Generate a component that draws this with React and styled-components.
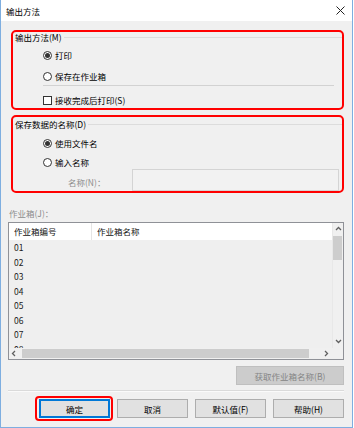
import styled, { createGlobalStyle } from 'styled-components';

const GlobalStyle = createGlobalStyle`
  html, body {
    margin: 0;
    padding: 0;
    background: #ffffff;
  }
  body {
    font-family: "Noto Sans CJK SC", "Noto Sans", sans-serif;
    font-size: 8.5px;
    color: #000;
  }
`;

const rows = ['01', '02', '03', '04', '05', '06', '07', '08'];

function Chevron({ dir }) {
  const paths = {
    up: 'M1 4 L3.5 1.5 L6 4',
    down: 'M1 2 L3.5 4.5 L6 2',
    left: 'M4 1 L1.5 3.5 L4 6',
    right: 'M2 1 L4.5 3.5 L2 6',
  };
  return (
    <svg width="7" height="7" viewBox="0 0 7 7">
      <path d={paths[dir]} fill="none" stroke="#606060" strokeWidth="1.3" />
    </svg>
  );
}

export default function App() {
  return (
    <>
      <GlobalStyle />
      <Window>
        <TitleBar>
          <Title>输出方法</Title>
          <svg width="9" height="9" viewBox="0 0 9 9">
            <path d="M0.5 0.5 L8.5 8.5 M8.5 0.5 L0.5 8.5" stroke="#222" strokeWidth="1" />
          </svg>
        </TitleBar>
        <Body>
          <Highlight $h={80}>
            <Legend $top={0}>
              <span>输出方法(M)</span>
              <LegendLine />
            </Legend>
            <Option $top={6}>
              <Radio $checked />
              <span>打印</span>
            </Option>
            <Option $top={9}>
              <Radio />
              <span>保存在作业箱</span>
            </Option>
            <Separator />
            <Option $top={8}>
              <Check />
              <span>接收完成后打印(S)</span>
            </Option>
          </Highlight>

          <Highlight $h={78} $top={5}>
            <Legend $top={2}>
              <span>保存数据的名称(D)</span>
              <LegendLine />
            </Legend>
            <Option $top={7}>
              <Radio $checked />
              <span>使用文件名</span>
            </Option>
            <Option $top={7}>
              <Radio />
              <span>输入名称</span>
            </Option>
            <NameRow>
              <NameLabel>名称(N)：</NameLabel>
              <NameInput />
            </NameRow>
          </Highlight>

          <BoxLabel>作业箱(J)：</BoxLabel>

          <ListBox>
            <ListMain>
              <ListHeader>
                <HeaderCell $w={83}>作业箱编号</HeaderCell>
                <HeaderCell>作业箱名称</HeaderCell>
              </ListHeader>
              {rows.map((r) => (
                <ListRow key={r}>{r}</ListRow>
              ))}
            </ListMain>
            <VScroll>
              <ArrowCell><Chevron dir="up" /></ArrowCell>
              <VThumb />
              <Spacer />
              <ArrowCell><Chevron dir="down" /></ArrowCell>
            </VScroll>
            <HScroll>
              <ArrowCell $w={11}><Chevron dir="left" /></ArrowCell>
              <HThumb />
              <Spacer />
              <ArrowCell $w={11}><Chevron dir="right" /></ArrowCell>
            </HScroll>
            <Corner />
          </ListBox>

          <FetchRow>
            <DisabledButton>获取作业箱名称(B)</DisabledButton>
          </FetchRow>

          <BottomLine />

          <ButtonRow>
            <ButtonMark>
              <Button $default>确定</Button>
            </ButtonMark>
            <Button>取消</Button>
            <Button>默认值(F)</Button>
            <Button>帮助(H)</Button>
          </ButtonRow>
        </Body>
      </Window>
    </>
  );
}

const Window = styled.div`
  width: 353px;
  height: 428px;
  box-sizing: border-box;
  border: 1px solid #7eaee0;
  border-top: none;
  background: #f0f0f0;
  display: flex;
  flex-direction: column;
`;

const TitleBar = styled.div`
  height: 21px;
  background: #ffffff;
  display: flex;
  align-items: center;
  justify-content: space-between;
  padding: 0 6px 0 5px;
  & > svg {
    margin-right: 1px;
  }
`;

const Title = styled.span`
  font-size: 8.5px;
  line-height: 12px;
`;

const Body = styled.div`
  padding: 9px 8px 0 7px;
  display: flex;
  flex-direction: column;
`;

const Highlight = styled.div`
  box-sizing: border-box;
  height: ${(p) => p.$h}px;
  margin: ${(p) => p.$top || 0}px 0 0 3px;
  border: 2px solid #ff0000;
  border-radius: 5px;
  display: flex;
  flex-direction: column;
`;

const Legend = styled.div`
  display: flex;
  align-items: center;
  height: 11px;
  line-height: 11px;
  margin-top: ${(p) => p.$top}px;
  padding-left: 2px;
  white-space: nowrap;
`;

const LegendLine = styled.div`
  flex: 1;
  height: 1px;
  background: #dcdcdc;
  margin-left: 2px;
  margin-top: -1px;
`;

const Option = styled.label`
  display: flex;
  align-items: center;
  height: 12px;
  line-height: 12px;
  margin-top: ${(p) => p.$top}px;
  padding-left: 30px;
  gap: 3px;
`;

const Radio = styled.span`
  width: 9px;
  height: 9px;
  box-sizing: border-box;
  border: 1px solid #333;
  border-radius: 50%;
  background: #fff;
  display: flex;
  align-items: center;
  justify-content: center;
  &::after {
    content: '';
    width: 5px;
    height: 5px;
    border-radius: 50%;
    background: ${(p) => (p.$checked ? '#333' : 'transparent')};
  }
`;

const Check = styled.span`
  width: 9px;
  height: 9px;
  box-sizing: border-box;
  border: 1px solid #333;
  background: #fff;
`;

const Separator = styled.div`
  height: 1px;
  background: #d2d2d2;
  margin: 3px 8px 0 30px;
`;

const NameRow = styled.div`
  display: flex;
  height: 22px;
  margin-top: 1px;
`;

const NameLabel = styled.span`
  width: 119px;
  box-sizing: border-box;
  padding: 7px 0 0 55px;
  line-height: 12px;
  color: #8c8c8c;
`;

const NameInput = styled.div`
  flex: 1;
  margin-right: 3px;
  box-sizing: border-box;
  border: 1px solid #d4d4d4;
  background: #f2f2f2;
`;

const BoxLabel = styled.div`
  margin-top: 14px;
  height: 12px;
  line-height: 12px;
  color: #8c8c8c;
  padding-left: 1px;
`;

const ListBox = styled.div`
  margin-top: 3px;
  height: 138px;
  box-sizing: border-box;
  border: 1px solid #8f9197;
  display: grid;
  grid-template-columns: 1fr 11px;
  grid-template-rows: 1fr 11px;
  background: #f0f0f0;
`;

const ListMain = styled.div`
  overflow: hidden;
  background: #efefef;
`;

const ListHeader = styled.div`
  display: flex;
  height: 17px;
  background: #ffffff;
`;

const HeaderCell = styled.div`
  width: ${(p) => (p.$w ? `${p.$w}px` : 'auto')};
  flex: ${(p) => (p.$w ? 'none' : '1')};
  box-sizing: border-box;
  padding-left: 5px;
  line-height: 17px;
  border-right: ${(p) => (p.$w ? '1px solid #e5e5e5' : 'none')};
  color: #111;
`;

const ListRow = styled.div`
  height: 14.5px;
  line-height: 14.5px;
  padding-left: 5px;
  color: #1a1a1a;
`;

const VScroll = styled.div`
  display: flex;
  flex-direction: column;
  background: #f0f0f0;
  border-left: 1px solid #e8e8e8;
`;

const HScroll = styled.div`
  display: flex;
  align-items: stretch;
  background: #f0f0f0;
`;

const ArrowCell = styled.div`
  height: ${(p) => (p.$w ? 'auto' : '13px')};
  width: ${(p) => (p.$w ? `${p.$w}px` : 'auto')};
  display: flex;
  align-items: center;
  justify-content: center;
`;

const VThumb = styled.div`
  height: 24px;
  margin: 0 1px 0 0;
  background: #cdcdcd;
`;

const HThumb = styled.div`
  width: 287px;
  margin: 1px 0 1px 2px;
  background: #cdcdcd;
`;

const Spacer = styled.div`
  flex: 1;
`;

const Corner = styled.div`
  background: #f0f0f0;
`;

const FetchRow = styled.div`
  display: flex;
  justify-content: flex-end;
  margin-top: 6px;
`;

const DisabledButton = styled.div`
  width: 108px;
  height: 19px;
  box-sizing: border-box;
  border: 1px solid #bfbfbf;
  background: #cccccc;
  color: #858585;
  display: flex;
  align-items: center;
  justify-content: center;
`;

const BottomLine = styled.div`
  height: 1px;
  margin-top: 5px;
  background: #dadada;
  box-shadow: 0 1px 0 #fafafa;
`;

const ButtonRow = styled.div`
  display: flex;
  justify-content: flex-end;
  gap: 7px;
  margin-top: 8px;
`;

const ButtonMark = styled.div`
  margin: -3px -3px -3px -4px;
  padding: 1px 1px 1px 2px;
  border: 2px solid #ff0000;
  border-radius: 4px;
  display: flex;
`;

const Button = styled.div`
  width: 71px;
  height: 19px;
  box-sizing: border-box;
  border: 1px solid ${(p) => (p.$default ? '#0078d7' : '#adadad')};
  box-shadow: ${(p) => (p.$default ? 'inset 0 0 0 1px #0078d7' : 'none')};
  background: #e1e1e1;
  display: flex;
  align-items: center;
  justify-content: center;
`;
